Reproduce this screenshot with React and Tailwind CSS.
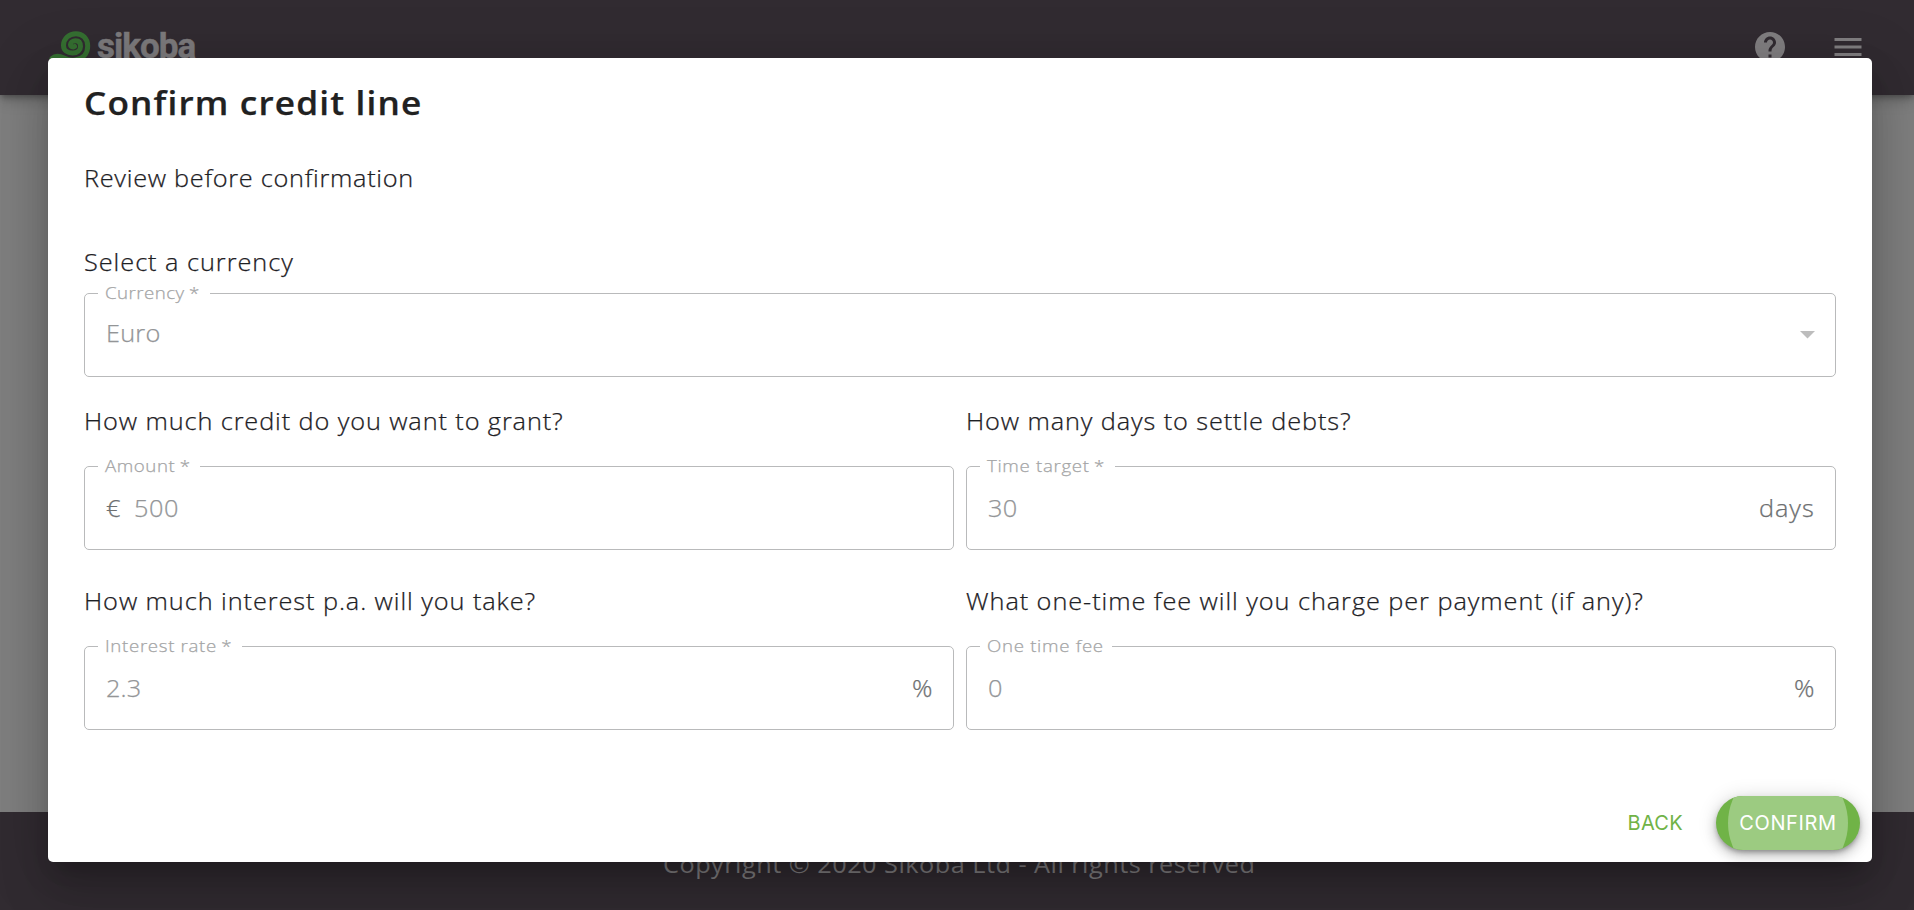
import { MdHelp, MdMenu } from "react-icons/md";

function Logo() {
  return (
    <div className="flex items-start pl-[49px] pt-[30px]">
      <svg className="h-11 w-[46px] shrink-0" viewBox="0 0 46 44" fill="none">
        <path
          d="M3 28.500 C6 25.500 11 26 15 28 C19 30 22 30.500 26 30 C34 29 38.700 23.500 38.700 16 C38.700 8.500 33.500 3.800 27 3.800 C20 3.800 14.500 8.500 14.500 15.500 C14.500 20.500 18.500 23 23.500 23 C28.500 23 31.500 20 31.500 16.500 C31.500 12.500 29.500 10.700 26.500 10.700 C23.500 10.700 21.500 12.500 21.500 14.500 C21.500 16.700 24 17.500 25.500 16.500"
          stroke="#356f31"
          strokeWidth="5"
          strokeLinecap="round"
        />
      </svg>
      <span className="-mt-[8px] ml-[2px] font-['Roboto',sans-serif] text-[35px] font-bold leading-[50px] tracking-[-1px] text-[#7c7a7c] [-webkit-text-stroke:0.5px]">
        sikoba
      </span>
    </div>
  );
}

function Field({ label, required, value, prefix, suffix, select, notchClass, labelClass, valueClass }) {
  return (
    <fieldset className="h-[94px] min-w-0 rounded-[5px] border border-[#b9babb] pl-[13px] pr-[20px]">
      <legend className={"h-5 whitespace-nowrap pl-[7px] text-[17px] leading-5 text-[#a4a5a6] " + notchClass}>
        <span className={"inline-block origin-left scale-x-110 " + labelClass}>
          {label}
          {required && <span className="ml-[4px]">*</span>}
        </span>
      </legend>
      <div className={"flex items-center pl-[8px] text-[23px] text-[#939597] " + (select ? "h-[61px]" : "h-[64px]")}>
        {prefix && <span className="mr-[15px] origin-left scale-x-110 text-[#6d6f71]">{prefix}</span>}
        <span className={"origin-left scale-x-110 " + valueClass}>{value}</span>
        <span className="ml-auto origin-right scale-x-110 tracking-[0.900px] text-[#6d6f71]">{suffix}</span>
        {select && (
          <svg className="mt-[3px] h-[8px] w-[15px]" viewBox="0 0 15 8">
            <path d="M0 0H15L7.500 7.500Z" fill="#bdbdbd" />
          </svg>
        )}
      </div>
    </fieldset>
  );
}

function Question({ className, children }) {
  return (
    <h2 className="whitespace-nowrap text-[23px] leading-8 text-[#1d2024]">
      <span className={"inline-block origin-left scale-x-110 " + className}>{children}</span>
    </h2>
  );
}

function Dialog() {
  return (
    <div
      role="dialog"
      className="flex h-[804px] w-[1824px] flex-col rounded-[5px] bg-white pl-9 pr-9 shadow-[0_14px_19px_-9px_rgba(0,0,0,0.2),0_30px_48px_4px_rgba(0,0,0,0.14),0_11px_58px_10px_rgba(0,0,0,0.12)] [-webkit-text-stroke:0.25px]"
    >
      <h1 className="pt-[23px] text-[32px] font-semibold leading-[44px] text-[#212121]">
        <span className="inline-block origin-left scale-x-110 tracking-[1.040px]">Confirm credit line</span>
      </h1>
      <div className="mt-[37px]">
        <Question className="tracking-[0.650px]">Review before confirmation</Question>
      </div>
      <div className="mt-[52px]">
        <Question className="tracking-[0.870px]">Select a currency</Question>
      </div>
      <div className="mt-[5px]">
        <Field label="Currency" required value="Euro" select notchClass="w-[112px]" labelClass="tracking-[0.400px]" valueClass="tracking-[0.200px]" />
      </div>
      <div className="mt-[28px] grid grid-cols-2 gap-x-3">
        <Question className="tracking-[0.810px]">How much credit do you want to grant?</Question>
        <Question className="tracking-[0.810px]">How many days to settle debts?</Question>
      </div>
      <div className="mt-[19px] grid grid-cols-2 gap-x-3">
        <Field label="Amount" required value="500" prefix="€" notchClass="w-[102px]" labelClass="tracking-[0.500px]" valueClass="tracking-[0.500px]" />
        <Field label="Time target" required value="30" suffix="days" notchClass="w-[135px]" labelClass="tracking-[0.600px]" valueClass="tracking-[0.200px]" />
      </div>
      <div className="mt-[35px] grid grid-cols-2 gap-x-3">
        <Question className="tracking-[0.840px]">How much interest p.a. will you take?</Question>
        <Question className="tracking-[0.850px]">What one-time fee will you charge per payment (if any)?</Question>
      </div>
      <div className="mt-[19px] grid grid-cols-2 gap-x-3">
        <Field label="Interest rate" required value="2.3" suffix="%" notchClass="w-[144px]" labelClass="tracking-[0.600px]" valueClass="tracking-[0.100px]" />
        <Field label="One time fee" value="0" suffix="%" notchClass="w-[132px]" labelClass="tracking-[0.610px]" valueClass="" />
      </div>
      <div className="-mr-6 mb-3 mt-auto flex h-[54px] items-center justify-end font-['Inter',sans-serif] text-[20px] font-normal [-webkit-text-stroke:0]">
        <button className="mr-[33px] pb-px tracking-[0.300px] text-[#70b347]">BACK</button>
        <button className="relative h-[54px] w-[144px] rounded-full bg-[#70b347] pb-px tracking-[0.600px] text-white shadow-[0_3px_5px_-1px_rgba(0,0,0,0.3),0_6px_12px_0_rgba(0,0,0,0.18),0_1px_20px_0_rgba(0,0,0,0.14)]">
          <span className="absolute inset-0 overflow-hidden rounded-full">
            <span className="absolute -top-[33px] left-3 h-[120px] w-[120px] rounded-full bg-[#9ccb81]" />
          </span>
          <span className="relative">CONFIRM</span>
        </button>
      </div>
    </div>
  );
}

export default function App() {
  return (
    <div className="relative flex h-[910px] w-full flex-col overflow-hidden bg-[#7f7f7f] font-['Open_Sans',sans-serif] font-light">
      <header className="flex h-[95px] shrink-0 items-start justify-between bg-[#312b31] shadow-[0_3px_6px_-1px_rgba(0,0,0,0.3),0_5px_14px_0_rgba(0,0,0,0.2)]">
        <Logo />
        <div className="flex gap-[42px] pr-[48px] pt-[29px] text-[#807e80]">
          <MdHelp className="size-9" />
          <MdMenu className="size-9" />
        </div>
      </header>
      <main className="grow" />
      <footer className="flex h-[98px] shrink-0 justify-center bg-[#312b31] pl-[5px] pt-[36px] text-[23px] font-normal leading-8 tracking-[0.430px] text-[#807e80]">
        <p className="scale-x-110">Copyright © 2020 Sikoba Ltd - All rights reserved</p>
      </footer>
      <div className="absolute inset-0 flex items-start pl-12 pt-[58px]">
        <Dialog />
      </div>
    </div>
  );
}
